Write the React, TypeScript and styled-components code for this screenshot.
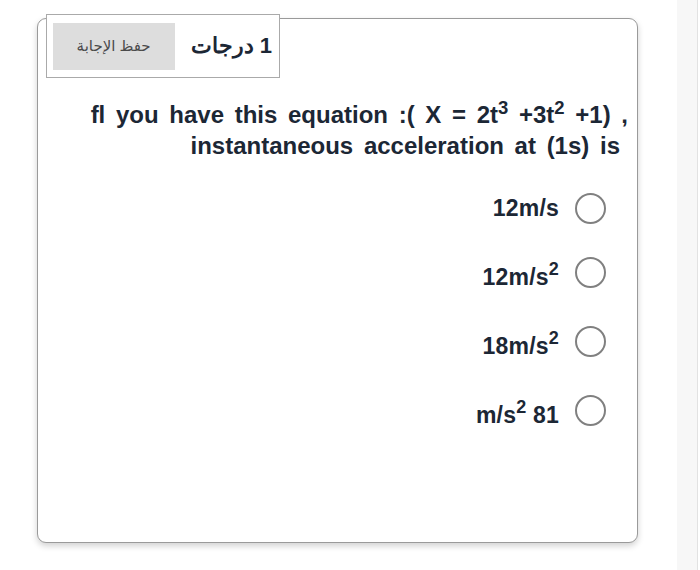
import styled, { createGlobalStyle } from "styled-components";

const GlobalStyle = createGlobalStyle`
  html, body {
    margin: 0;
    padding: 0;
    background: #ffffff;
    font-family: "Liberation Sans", Arial, sans-serif;
  }
`;

const Page = styled.div`
  display: flex;
  width: 700px;
  height: 570px;
  overflow: hidden;
`;

const Main = styled.div`
  width: 677px;
  padding: 18px 0 0 37px;
  box-sizing: border-box;
`;

const SideStrip = styled.div`
  width: 20px;
  background: #f7f7f7;
  border-right: 1px solid #e2e2e2;
`;

const Card = styled.div`
  width: 601px;
  height: 525px;
  box-sizing: border-box;
  border: 1.5px solid #9a9a9a;
  border-radius: 9px;
  background: #ffffff;
  box-shadow: 0 3px 6px rgba(0, 0, 0, 0.18);
`;

const Header = styled.div`
  direction: rtl;
  display: flex;
  align-items: center;
  gap: 16px;
  width: 234px;
  height: 64px;
  box-sizing: border-box;
  margin: -5px 0 0 8px;
  padding: 0 7px;
  border: 1.5px solid #aaaaaa;
  background: #ffffff;
`;

const Points = styled.span`
  font-size: 22px;
  font-weight: 700;
  color: #1c2735;
  white-space: nowrap;
`;

const SaveButton = styled.button`
  width: 122px;
  height: 47px;
  flex-shrink: 0;
  border: none;
  background: #dddddd;
  color: #4a4a4a;
  font-family: "Liberation Sans", "DejaVu Sans", sans-serif;
  font-size: 15px;
  padding: 0;
`;

const Question = styled.div`
  margin: 21px 9px 0 0;
  text-align: right;
  font-size: 24px;
  font-weight: 700;
  line-height: 31px;
  color: #1c2735;

  sup {
    font-size: 18.5px;
    line-height: 0;
    vertical-align: 9px;
  }
`;

const Line = styled.div<{ $inset?: number }>`
  white-space: nowrap;
  word-spacing: 4px;
  padding-right: ${(p) => p.$inset ?? 0}px;
`;

const Options = styled.div`
  display: flex;
  flex-direction: column;
  align-items: flex-end;
  gap: 27px;
  margin: 31px 31px 0 0;
`;

const Option = styled.label`
  display: flex;
  align-items: center;
  gap: 16px;
  font-size: 23px;
  font-weight: 700;
  line-height: 32px;
  letter-spacing: 0.2px;
  color: #1c2735;

  sup {
    font-size: 18px;
    line-height: 36px;
    vertical-align: 10px;
  }
`;

const Radio = styled.span`
  width: 31px;
  height: 31px;
  flex-shrink: 0;
  box-sizing: border-box;
  border: 2.5px solid #808080;
  border-radius: 50%;
`;

const options = [
  <>12m/s</>,
  <>
    12m/s<sup>2</sup>
  </>,
  <>
    18m/s<sup>2</sup>
  </>,
  <>
    m/s<sup>2</sup> 81
  </>,
];

export default function App() {
  return (
    <>
      <GlobalStyle />
      <Page>
        <Main>
          <Card>
            <Header>
              <Points>1 درجات</Points>
              <SaveButton>حفظ الإجابة</SaveButton>
            </Header>
            <Question>
              <Line>
                fl you have this equation :( X = 2t<sup>3</sup> +3t<sup>2</sup> +1) ,
              </Line>
              <Line $inset={8}>instantaneous acceleration at (1s) is</Line>
            </Question>
            <Options>
              {options.map((label, i) => (
                <Option key={i}>
                  <span>{label}</span>
                  <Radio />
                </Option>
              ))}
            </Options>
          </Card>
        </Main>
        <SideStrip />
      </Page>
    </>
  );
}
